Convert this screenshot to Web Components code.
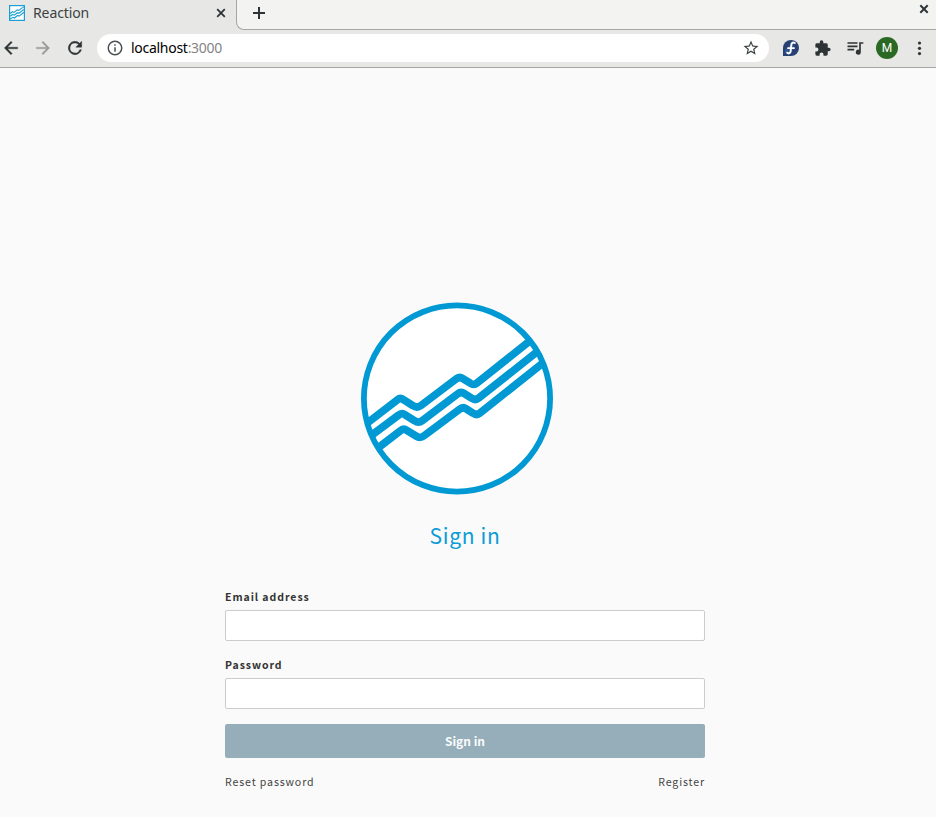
<!DOCTYPE html>
<html lang="en">
<head>
<meta charset="utf-8">
<title>Reaction</title>
<style>
html,body{margin:0;height:817px;overflow:hidden;background:#fafafa}
</style>
</head>
<body>
<browser-window></browser-window>
<script>
const define = (name, html) => {
  const t = document.createElement('template');
  t.innerHTML = html;
  customElements.define(name, class extends HTMLElement {
    constructor() {
      super();
      this.attachShadow({ mode: 'open' }).append(t.content.cloneNode(true));
    }
  });
};

define('tab-strip', `
<style>
:host{display:flex;height:30px;box-sizing:border-box;background:#e7e7e5;font:14px/26px "Noto Sans",sans-serif;color:#3c4244}
.tab{width:236px;display:flex;align-items:flex-start;box-sizing:border-box;padding-left:9px}
.fav{margin:5px 8px 0 0}
.x{margin:8px 0 0 auto;padding-right:10px}
.rest{flex:1;display:flex;justify-content:space-between;background:#f3f3f2;border-left:1px solid #a6a6a4;border-bottom:1px solid #a6a6a4;border-bottom-left-radius:8px;height:30px;box-sizing:border-box;padding:0 7px 0 16px}
svg{display:block;flex:none}
.title{font-size:14px;letter-spacing:-.1px}
</style>
<div class="tab">
<svg class="fav" width="16" height="16" viewBox="0 0 16 16" fill="none" stroke="#1b9fd4"><rect x=".6" y=".6" width="14.8" height="14.8" fill="#fff" stroke-width="1.2"/><path d="M1 8.5 3.5 6.7 5 7.4 8.2 4.9 9.7 5.5 15 1.6M1 11.3 3.7 9.5 5.2 10.2 8.4 7.7 9.9 8.3 15 4.4M1 14 3.9 12.3 5.4 13 8.6 10.5 10.1 11.1 15 7.2" stroke-width="1.1"/></svg>
<span class="title">Reaction</span>
<svg class="x" width="10" height="10" viewBox="0 0 10 10"><path d="M1.2 1.2 8.8 8.8M8.8 1.2 1.2 8.8" stroke="#2e3436" stroke-width="1.8"/></svg>
</div>
<div class="rest">
<svg style="margin-top:7px" width="12" height="12" viewBox="0 0 12 12"><path d="M6 0V12M0 6H12" stroke="#2e3436" stroke-width="2"/></svg>
<svg style="margin-top:4px" width="10" height="10" viewBox="0 0 10 10"><path d="M1.3 1.3 8.7 8.7M8.7 1.3 1.3 8.7" stroke="#2e3436" stroke-width="2"/></svg>
</div>`);

define('address-bar', `
<style>
:host{display:flex;align-items:center;width:672px;height:28px;box-sizing:border-box;border-radius:14px;background:#fff;padding:0 9px 0 9px;font:14px/28px "Noto Sans",sans-serif;letter-spacing:-.28px;color:#858585}
b{font-weight:400;color:#000}
svg{display:block}
.url{margin-left:7px;flex:1}
</style>
<svg width="18" height="18" viewBox="0 0 24 24" fill="#4b5052"><path d="M11 7h2v2h-2zm0 4h2v6h-2zm1-9a10 10 0 1 0 0 20 10 10 0 0 0 0-20zm0 18a8 8 0 1 1 0-16 8 8 0 0 1 0 16z"/></svg>
<span class="url"><b>localhost</b>:3000</span>
<svg width="18" height="18" viewBox="0 0 24 24" fill="#3d4345"><path d="M22 9.24l-7.19-.62L12 2 9.19 8.63 2 9.24l5.46 4.73L5.82 21 12 17.27 18.18 21l-1.63-7.03L22 9.24zM12 15.4l-3.76 2.27 1-4.28-3.32-2.88 4.38-.38L12 6.1l1.71 4.04 4.38.38-3.32 2.88 1 4.28L12 15.4z"/></svg>`);

define('nav-toolbar', `
<style>
:host{display:flex;align-items:center;height:38px;box-sizing:border-box;background:#e7e7e5;border-bottom:1px solid #a6a6a4;padding-bottom:1px}
svg{display:block;flex:none}
.nav{display:flex;gap:12px;width:96px;padding-left:1px;box-sizing:content-box;margin-left:0}
.ext{display:flex;align-items:center;margin-left:13px}
.av{width:22px;height:22px;border-radius:50%;background:#2a6924;color:#fff;font:12px/22px Roboto,sans-serif;text-align:center;margin:0 12px 0 11px}
</style>
<div class="nav">
<svg width="20" height="20" viewBox="0 0 24 24" fill="#2e3436"><path d="M20 11H7.83l5.59-5.59L12 4l-8 8 8 8 1.41-1.41L7.83 13H20v-2z" stroke="#2e3436" stroke-width=".4"/></svg>
<svg width="20" height="20" viewBox="0 0 24 24" fill="#999b9a"><path d="M12 4l-1.41 1.41L16.17 11H4v2h12.17l-5.58 5.59L12 20l8-8z" stroke="#999b9a" stroke-width=".3"/></svg>
<svg width="20" height="20" viewBox="0 0 24 24" fill="#2e3436"><path d="M17.65 6.35A8 8 0 1 0 19.73 14h-2.08A6 6 0 1 1 12 6c1.66 0 3.14.69 4.22 1.78L13 11h7V4l-2.35 2.35z" stroke="#2e3436" stroke-width=".5"/></svg>
</div>
<address-bar></address-bar>
<div class="ext">
<svg width="18" height="18" viewBox="0 0 18 18"><path d="M9 1a8 8 0 1 1 0 16H1V9a8 8 0 0 1 8-8z" fill="#294172"/><path d="M13 3.8C10.9 2.8 9.4 3.9 9.2 6L8.6 11.8C8.4 14.5 5.8 15.2 4.6 13.4 3.8 11.7 5 10.4 6.3 10.3M5.8 8.9H12" fill="none" stroke="#315a9a" stroke-width="3"/><path d="M12.8 4C10.9 2.9 9.5 4 9.3 6L8.7 11.8C8.5 14.3 6.4 14.9 5.2 13.7M6 9.1H12" fill="none" stroke="#fff" stroke-width="1.9" stroke-linecap="round"/></svg>
<svg style="margin-left:15px" width="16" height="16" viewBox="1.5 .5 22 22" fill="#2e3436"><path d="M20.5 11H19V7a2 2 0 0 0-2-2h-4V3.5a2.5 2.5 0 0 0-5 0V5H4a2 2 0 0 0-2 2v3.8h1.5a2.7 2.7 0 0 1 0 5.4H2V20a2 2 0 0 0 2 2h3.8v-1.5a2.7 2.7 0 0 1 5.4 0V22H17a2 2 0 0 0 2-2v-4h1.5a2.5 2.5 0 0 0 0-5z"/></svg>
<svg style="margin-left:14px" width="20" height="20" viewBox="0 0 24 24" fill="#2e3436"><path d="M15 5H3v2h12V5zm0 4H3v2h12V9zM3 15h8v-2H3v2zM17 5v9.18A3 3 0 1 0 19 17V7h3V5h-5z"/></svg>
<div class="av">M</div>
<svg width="18" height="18" viewBox="0 0 18 18" fill="#2e3436"><circle cx="9.5" cy="4" r="1.6"/><circle cx="9.5" cy="9.3" r="1.6"/><circle cx="9.5" cy="14.6" r="1.6"/></svg>
</div>`);

define('reaction-logo', `
<style>:host{display:block;width:192px;height:193px}svg{display:block}</style>
<svg width="192" height="193" viewBox="361 302 192 193" fill="none" stroke="#0099d3">
<clipPath id="c"><circle cx="457" cy="398.5" r="94"/></clipPath>
<circle cx="457" cy="398.5" r="93.1" fill="#fff" stroke-width="5.8"/>
<g clip-path="url(#c)" stroke-width="7.7">
<path d="M364 425.5 397.5 399.8Q400.2 397.5 403.2 399.5L413 405.7Q417 408.5 421 405.5L456 379Q459.3 376.2 462.7 378.5L470 383Q473.7 385.8 477 383L535 336.8"/>
<path d="M364 440.8 398.5 415.2Q401.7 412.4 405 414.7L414.5 420.7Q418.5 423.5 422.3 420.7L457.5 394Q461 391.2 464.2 393.5L471.7 398.2Q475.3 400.8 478.7 398L545 345.5"/>
<path d="M367 456.4 400 431Q403.3 428 406.6 430.2L416 436Q420 438.7 423.7 436L459.5 409.3Q462.7 406.5 466 408.7L473 413.2Q476.7 415.8 480 413L552 355.7"/>
</g></svg>`);

define('form-field', `
<style>
:host{display:block;height:68px}
label{display:block;height:20px;line-height:14px;font-size:10.5px;font-weight:700;letter-spacing:.95px;color:#333}
input{display:block;width:480px;height:31px;box-sizing:border-box;border:1px solid #ccc;border-radius:2px;background:#fff;margin:0;outline:0}
</style>
<label><slot></slot></label><input>`);

define('sign-in', `
<style>
:host{display:block;width:480px;margin:0 0 0 225px;padding-top:234px;font-family:"Noto Sans CJK SC","Noto Sans",sans-serif;color:#444}
reaction-logo{margin-left:136px}
h1{margin:24px 0 39px;height:32px;line-height:32px;font-size:21px;font-weight:400;letter-spacing:.65px;text-align:center;color:#0d9cd6}
button{display:block;width:480px;height:34px;margin:-2px 0 0;border:0;border-radius:2px;background:#96aeba;color:#fafcfd;font:700 12px/34px "Noto Sans CJK SC",sans-serif;padding:0}
.links{display:flex;justify-content:space-between;margin-top:14px;font-size:10.6px;line-height:20px;letter-spacing:.87px}
</style>
<reaction-logo></reaction-logo>
<h1>Sign in</h1>
<form-field>Email address</form-field>
<form-field>Password</form-field>
<button>Sign in</button>
<div class="links"><span>Reset password</span><span>Register</span></div>`);

define('browser-window', `
<style>:host{display:flex;flex-direction:column;width:936px;height:817px;overflow:hidden;background:#fafafa}</style>
<tab-strip></tab-strip><nav-toolbar></nav-toolbar><sign-in></sign-in>`);
</script>
</body>
</html>
